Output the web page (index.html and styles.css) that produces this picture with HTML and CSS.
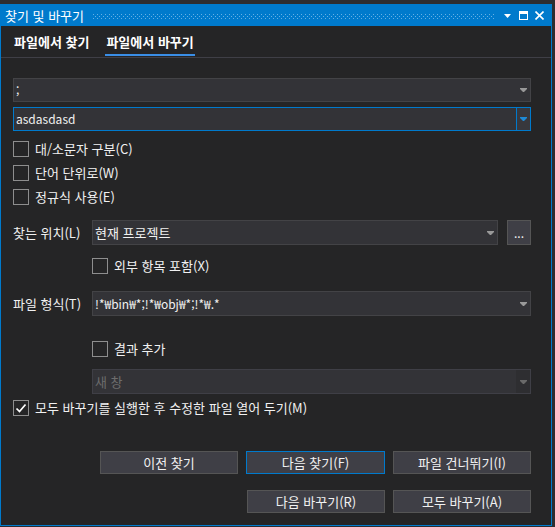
FILE: index.html
```html
<!DOCTYPE html>
<html lang="ko">
<head>
<meta charset="utf-8">
<title>찾기 및 바꾸기</title>
<link rel="stylesheet" href="styles.css">
</head>
<body>
<div class="window">
  <div class="titlebar">
    <span class="title">찾기 및 바꾸기</span>
    <svg class="grip" height="5" preserveAspectRatio="none">
      <defs>
        <pattern id="dots" width="4" height="4" patternUnits="userSpaceOnUse">
          <rect x="0" y="0" width="1" height="1" fill="#66b0e4"/>
          <rect x="2" y="2" width="1" height="1" fill="#66b0e4"/>
        </pattern>
      </defs>
      <rect width="100%" height="5" fill="url(#dots)"/>
    </svg>
    <svg class="tb-icon tb-drop" width="7" height="4" viewBox="0 0 7 4"><polygon points="0,0 7,0 3.5,4" fill="#ffffff"/></svg>
    <svg class="tb-icon tb-max" width="9" height="9" viewBox="0 0 9 9"><path d="M0 0H9V9H0Z M1 3V8H8V3Z" fill="#ffffff" fill-rule="evenodd"/></svg>
    <svg class="tb-icon tb-close" width="9" height="9" viewBox="0 0 9 9"><path d="M0.5 0.5L8.5 8.5M8.5 0.5L0.5 8.5" stroke="#ffffff" stroke-width="1.6"/></svg>
  </div>

  <div class="tabs">
    <div class="tab">파일에서 찾기</div>
    <div class="tab active">파일에서 바꾸기</div>
  </div>

  <div class="content">
    <div class="combo combo-find">
      <span class="val latin">;</span>
      <span class="arrow"><svg width="7" height="4" viewBox="0 0 7 4"><polygon points="0,0 7,0 7,1 4,4 3,4 0,1" fill="#999999"/></svg></span>
    </div>
    <div class="combo combo-replace focused">
      <span class="val latin">asdasdasd</span>
      <span class="arrow arrow-btn"><svg width="7" height="4" viewBox="0 0 7 4"><polygon points="0,0 7,0 7,1 4,4 3,4 0,1" fill="#1e8ad6"/></svg></span>
    </div>

    <div class="check check-first"><span class="box"></span><span>대/소문자 구분(C)</span></div>
    <div class="check"><span class="box"></span><span>단어 단위로(W)</span></div>
    <div class="check"><span class="box"></span><span>정규식 사용(E)</span></div>

    <div class="field-row row-loc">
      <span class="label">찾는 위치(L)</span>
      <div class="combo combo-grow">
        <span class="val val-wide">현재 프로젝트</span>
        <span class="arrow"><svg width="7" height="4" viewBox="0 0 7 4"><polygon points="0,0 7,0 7,1 4,4 3,4 0,1" fill="#999999"/></svg></span>
      </div>
      <div class="browse">...</div>
    </div>

    <div class="check indent check-ext"><span class="box"></span><span>외부 항목 포함(X)</span></div>

    <div class="field-row row-type">
      <span class="label">파일 형식(T)</span>
      <div class="combo combo-grow">
        <span class="val val-wide latin">!*₩bin₩*;!*₩obj₩*;!*₩.*</span>
        <span class="arrow"><svg width="7" height="4" viewBox="0 0 7 4"><polygon points="0,0 7,0 7,1 4,4 3,4 0,1" fill="#999999"/></svg></span>
      </div>
    </div>

    <div class="check indent check-append"><span class="box"></span><span>결과 추가</span></div>

    <div class="combo combo-window disabled">
      <span class="val val-wide">새 창</span>
      <span class="arrow arrow-dis"><svg width="7" height="4" viewBox="0 0 7 4"><polygon points="0,0 7,0 7,1 4,4 3,4 0,1" fill="#6a6a6a"/></svg></span>
    </div>

    <div class="check check-keep">
      <span class="box"><svg width="14" height="14" viewBox="0 0 14 14"><path d="M2.5 7.5L5.5 10.5L11.5 3.5" stroke="#ffffff" stroke-width="1.7" fill="none"/></svg></span>
      <span>모두 바꾸기를 실행한 후 수정한 파일 열어 두기(M)</span>
    </div>

    <div class="buttons buttons-1">
      <div class="btn">이전 찾기</div>
      <div class="btn btn-default">다음 찾기(F)</div>
      <div class="btn">파일 건너뛰기(I)</div>
    </div>
    <div class="buttons buttons-2">
      <div class="btn">다음 바꾸기(R)</div>
      <div class="btn">모두 바꾸기(A)</div>
    </div>
  </div>
</div>
</body>
</html>
```

FILE: styles.css
```css
* {
  box-sizing: border-box;
}

html, body {
  margin: 0;
  padding: 0;
}

body {
  width: 555px;
  height: 527px;
  overflow: hidden;
  background: #2d2d30;
  padding-top: 4px;
  font-family: "Noto Sans CJK KR", "Noto Sans", sans-serif;
  font-size: 13px;
  color: #f1f1f1;
}

.latin {
  font-size: 12px;
}

.window {
  width: 552px;
  height: 522px;
  border: 1px solid #007acc;
  background: #252526;
  display: flex;
  flex-direction: column;
}

/* Title bar */
.titlebar {
  height: 21px;
  flex: none;
  background: #007acc;
  display: flex;
  align-items: center;
  padding-left: 4px;
  padding-right: 7px;
  color: #ffffff;
}

.title {
  line-height: 16px;
  white-space: nowrap;
}

.grip {
  flex: 1;
  margin-left: 9px;
  margin-right: 9px;
  margin-top: 1px;
}

.tb-icon {
  flex: none;
  display: block;
}

.tb-drop {
  margin-top: 1px;
}

.tb-max {
  margin-left: 8px;
}

.tb-close {
  margin-left: 7px;
}

/* Tabs */
.tabs {
  display: flex;
  gap: 15px;
  padding: 0 0 1px 12px;
  border-bottom: 1px solid #3f3f46;
  flex: none;
}

.tab {
  padding: 8px 1px 4px;
  line-height: 16px;
  font-weight: bold;
  color: #ffffff;
  border-bottom: 2px solid transparent;
}

.tab.active {
  border-bottom-color: #3a8ee6;
}

/* Content */
.content {
  padding: 0 20px 0 12px;
  display: flex;
  flex-direction: column;
}

.combo {
  height: 24px;
  border: 1px solid #434346;
  background: #333337;
  display: flex;
  align-items: center;
  line-height: 16px;
}

.combo .val {
  padding-left: 2px;
  white-space: nowrap;
}

.combo .arrow {
  margin-left: auto;
  width: 14px;
  height: 100%;
  display: flex;
  align-items: center;
  justify-content: center;
}

.combo .arrow svg {
  display: block;
}

.combo-find {
  margin-top: 20px;
}

.combo-replace {
  margin-top: 5px;
}

.combo.focused {
  border-color: #007acc;
}

.combo .arrow-btn {
  border-left: 1px solid #007acc;
  background: #38383d;
}

.check {
  height: 24px;
  display: flex;
  align-items: center;
  line-height: 16px;
  white-space: nowrap;
}

.check .box {
  width: 16px;
  height: 16px;
  border: 1px solid #8e8e8e;
  margin-right: 6px;
  flex: none;
  display: flex;
  align-items: center;
  justify-content: center;
}

.check .box svg {
  display: block;
}

.check-first {
  margin-top: 6px;
}

.indent {
  margin-left: 79px;
}

.field-row {
  display: flex;
  align-items: center;
}

.field-row .label {
  width: 79px;
  flex: none;
  line-height: 16px;
  white-space: nowrap;
}

.combo-grow {
  flex: 1;
  height: 25px;
}

.browse {
  width: 24px;
  height: 25px;
  margin-left: 9px;
  flex: none;
  background: #3f3f46;
  border: 1px solid #555555;
  display: flex;
  align-items: center;
  justify-content: center;
  line-height: 16px;
  font-size: 12px;
  color: #f1f1f1;
}

.row-loc {
  margin-top: 11px;
}

.check-ext {
  margin-top: 9px;
}

.row-type {
  margin-top: 13px;
}

.check-append {
  margin-top: 21px;
}

.combo-window {
  margin-top: 8px;
  margin-left: 79px;
  height: 25px;
  border-color: #3f3f46;
  background: #333337;
}

.combo.disabled .val {
  color: #6d6d6d;
}

.combo .arrow-dis {
  background: #2e2e31;
}

.check-keep {
  margin-top: 2px;
}

/* Buttons */
.buttons {
  display: flex;
  justify-content: flex-end;
  gap: 8px;
}

.buttons-1 {
  margin-top: 31px;
}

.buttons-2 {
  margin-top: 16px;
}

.btn {
  width: 138px;
  height: 23px;
  background: #3f3f46;
  border: 1px solid #555555;
  display: flex;
  align-items: center;
  justify-content: center;
  line-height: 16px;
  color: #f1f1f1;
  white-space: nowrap;
}

.btn-default {
  width: 139px;
  border-color: #007acc;
}
```
